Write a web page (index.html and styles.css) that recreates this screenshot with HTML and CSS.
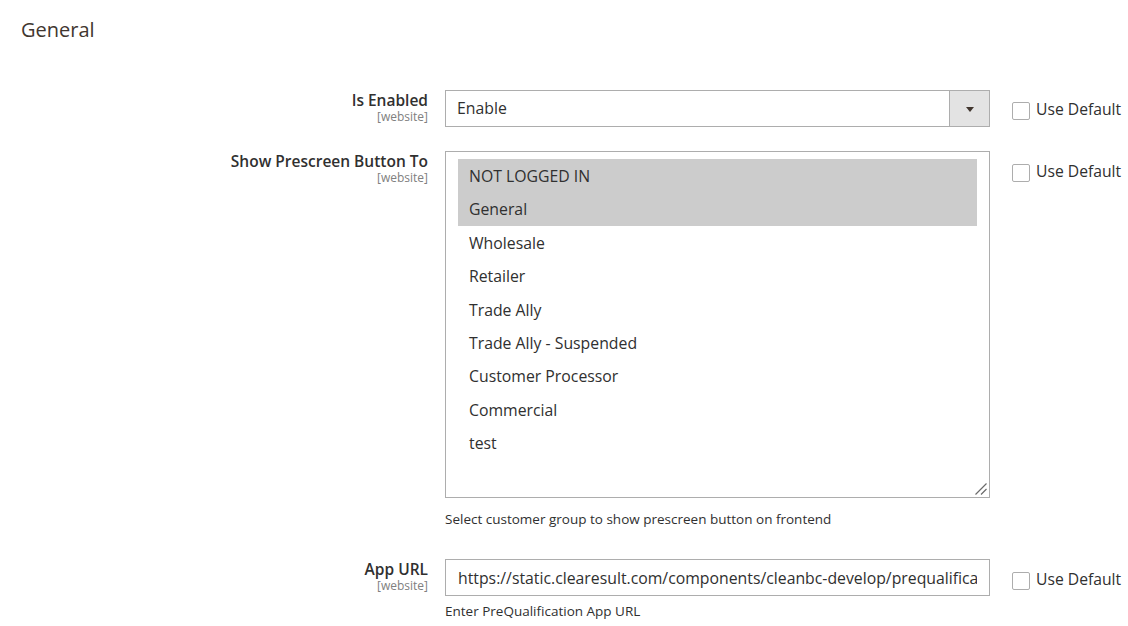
FILE: index.html
```html
<!DOCTYPE html>
<html lang="en">
<head>
<meta charset="utf-8">
<title>General</title>
<link rel="stylesheet" href="styles.css">
</head>
<body>
<div class="page">
  <h2 class="section-title">General</h2>

  <div class="row row-first">
    <div class="label-col">
      <div class="label">Is Enabled</div>
      <div class="scope">[website]</div>
    </div>
    <div class="control">
      <div class="select">
        <span class="select-value">Enable</span>
        <span class="select-arrow"><span class="triangle"></span></span>
      </div>
    </div>
    <div class="use-default">
      <span class="checkbox"></span>
      <span class="use-text">Use Default</span>
    </div>
  </div>

  <div class="row row-second">
    <div class="label-col">
      <div class="label">Show Prescreen Button To</div>
      <div class="scope">[website]</div>
    </div>
    <div class="control">
      <div class="multiselect">
        <div class="option selected">NOT LOGGED IN</div>
        <div class="option selected">General</div>
        <div class="option">Wholesale</div>
        <div class="option">Retailer</div>
        <div class="option">Trade Ally</div>
        <div class="option">Trade Ally - Suspended</div>
        <div class="option">Customer Processor</div>
        <div class="option">Commercial</div>
        <div class="option">test</div>
        <svg class="grip" width="14" height="14" viewBox="0 0 14 14">
          <path d="M12.5 1.5 L1.5 12.5 M12.5 7 L7 12.5" stroke="#6b6b6b" stroke-width="1.2" fill="none"/>
        </svg>
      </div>
      <div class="note note-list">Select customer group to show prescreen button on frontend</div>
    </div>
    <div class="use-default use-default-list">
      <span class="checkbox"></span>
      <span class="use-text">Use Default</span>
    </div>
  </div>

  <div class="row row-third">
    <div class="label-col">
      <div class="label">App URL</div>
      <div class="scope">[website]</div>
    </div>
    <div class="control">
      <input class="text-input" type="text" readonly value="https://static.clearesult.com/components/cleanbc-develop/prequalification/index.html">
      <div class="note note-input">Enter PreQualification App URL</div>
    </div>
    <div class="use-default use-default-list">
      <span class="checkbox"></span>
      <span class="use-text">Use Default</span>
    </div>
  </div>
</div>
</body>
</html>
```

FILE: styles.css
```css
html, body {
  margin: 0;
  padding: 0;
  background: #ffffff;
}

body {
  font-family: "Open Sans", "Noto Sans", "Liberation Sans", sans-serif;
  color: #303030;
}

.page {
  padding-top: 16px;
  width: 1128px;
  height: 626px;
  overflow: hidden;
}

.section-title {
  margin: 0 0 46px 0;
  padding-left: 21px;
  font-size: 20px;
  line-height: 28px;
  font-weight: 400;
  color: #41362f;
}

.row {
  display: grid;
  grid-template-columns: 428px 545px 1fr;
  column-gap: 17px;
  align-items: start;
}

.row-first {
  margin-bottom: 24px;
}

.row-second {
  margin-bottom: 31px;
}

.label-col {
  text-align: right;
}

.label {
  font-size: 15.5px;
  line-height: 20px;
  font-weight: 600;
  color: #303030;
}

.scope {
  font-size: 12px;
  line-height: 14px;
  color: #808080;
}

.control {
  display: flex;
  flex-direction: column;
}

.select {
  box-sizing: border-box;
  height: 37px;
  border: 1px solid #adadad;
  display: flex;
  align-items: stretch;
  background: #ffffff;
}

.select-value {
  flex: 1;
  padding-left: 11px;
  font-size: 15.8px;
  line-height: 35px;
  color: #303030;
}

.select-arrow {
  width: 39px;
  background: #e3e3e3;
  border-left: 1px solid #adadad;
  display: flex;
  align-items: center;
  justify-content: center;
}

.triangle {
  width: 0;
  height: 0;
  border-left: 4px solid transparent;
  border-right: 4px solid transparent;
  border-top: 5px solid #41362f;
  margin-top: 1px;
}

.multiselect {
  position: relative;
  box-sizing: border-box;
  height: 347px;
  border: 1px solid #adadad;
  padding: 7px 12px;
  background: #ffffff;
}

.option {
  height: 33.4px;
  line-height: 34px;
  padding-left: 11px;
  font-size: 15.8px;
  color: #303030;
  white-space: nowrap;
}

.option.selected {
  background: #cccccc;
}

.grip {
  position: absolute;
  right: 1px;
  bottom: 1px;
}

.note {
  font-size: 13.5px;
  line-height: 18px;
  color: #303030;
}

.note-list {
  margin-top: 12px;
}

.note-input {
  margin-top: 6px;
}

.text-input {
  box-sizing: border-box;
  width: 545px;
  height: 37px;
  margin: 0;
  border: 1px solid #adadad;
  border-radius: 0;
  padding: 0 12px 0 12px;
  font-family: "Open Sans", "Noto Sans", "Liberation Sans", sans-serif;
  font-size: 15.8px;
  color: #303030;
  background: #ffffff;
  outline: none;
}

.use-default {
  display: flex;
  align-items: center;
  gap: 6px;
  padding-top: 10px;
  padding-left: 5px;
}

.use-default-list {
  padding-top: 11px;
}

.checkbox {
  box-sizing: border-box;
  width: 18px;
  height: 18px;
  border: 1px solid #adadad;
  border-radius: 2px;
  background: #ffffff;
  flex: none;
}

.use-text {
  font-size: 15.7px;
  line-height: 18px;
  padding-bottom: 3px;
  color: #303030;
  white-space: nowrap;
}
```
